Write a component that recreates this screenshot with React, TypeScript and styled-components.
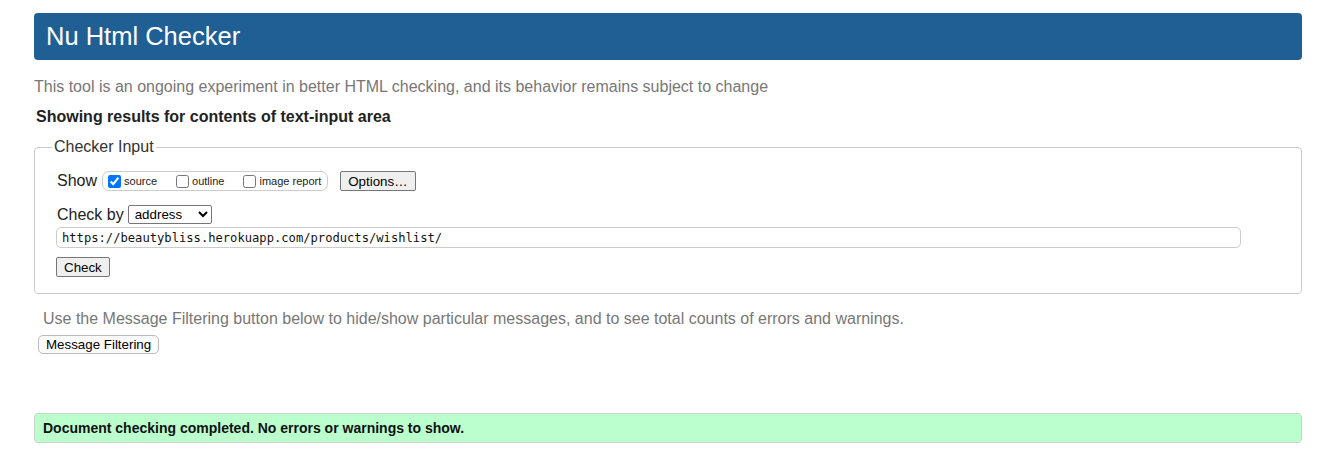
import React from "react";
import styled, { createGlobalStyle } from "styled-components";

const Global = createGlobalStyle`
  html, body { margin: 0; padding: 0; background: #fff; }
  body { font-family: "Liberation Sans", Arial, sans-serif; color: #222; }
`;

const Page = styled.div`
  padding: 13px 22px 0 34px;
  display: flex;
  flex-direction: column;
`;

const Header = styled.header`
  height: 47px;
  background: #1f5f94;
  border-radius: 4px;
  display: flex;
  align-items: center;
  padding-left: 12px;
  h1 {
    margin: 0;
    font-size: 25.5px;
    font-weight: normal;
    color: #fff;
    line-height: 1;
  }
`;

const Note = styled.p<{ $indent?: number; $top: number }>`
  margin: ${(p) => p.$top}px 0 0 ${(p) => p.$indent ?? 0}px;
  font-size: 16px;
  line-height: 18px;
  color: #777;
`;

const Results = styled.h2`
  margin: 12px 0 0 2px;
  font-size: 16px;
  line-height: 18px;
  font-weight: bold;
  color: #222;
`;

const Fieldset = styled.fieldset`
  margin: 12px 0 0 0;
  padding: 0 17px 16px 17px;
  border: 1px solid #ccc;
  border-radius: 4px;
  min-width: 0;
`;

const Legend = styled.legend`
  padding: 0 2px;
  font-size: 16px;
  line-height: 18px;
  color: #333;
`;

const Row = styled.div<{ $top: number }>`
  display: flex;
  align-items: center;
  margin: ${(p) => p.$top}px 0 0 5px;
  font-size: 16px;
  color: #222;
`;

const RowLabel = styled.span`
  font-size: 16px;
  line-height: 18px;
  margin-right: 4px;
`;

const Group = styled.span`
  display: inline-flex;
  align-items: center;
  height: 18px;
  border: 1px solid #ccc;
  border-radius: 7px;
  padding: 0 6px 0 5px;
  margin-left: 1px;
  gap: 19px;
`;

const Opt = styled.label`
  display: inline-flex;
  align-items: center;
  gap: 3px;
  font-size: 11px;
  color: #222;
  input {
    margin: 0;
    width: 13px;
    height: 13px;
  }
`;

const Spacer = styled.span`
  width: 12px;
`;

const Btn = styled.button<{ $round?: boolean }>`
  font-family: "Liberation Sans", Arial, sans-serif;
  font-size: 13.33px;
  line-height: 15px;
  color: #000;
  background: ${(p) => (p.$round ? "#fcfcfc" : "#efefef")};
  border: 1px solid ${(p) => (p.$round ? "#bbb" : "#767676")};
  border-radius: ${(p) => (p.$round ? "5px" : "2px")};
  padding: 1px 7px;
  height: ${(p) => (p.$round ? "19px" : "20px")};
`;

const Select = styled.select`
  width: 84px;
  height: 19px;
  font-family: "Liberation Sans", Arial, sans-serif;
  font-size: 13.33px;
  padding: 0 2px;
  border: 1px solid #767676;
  border-radius: 2px;
  background: #fff;
  color: #000;
`;

const UrlInput = styled.input`
  margin: 3px 0 0 4px;
  width: 1185px;
  height: 21px;
  box-sizing: border-box;
  border: 1px solid #ccc;
  border-radius: 5px;
  padding: 0 5px;
  font-family: "DejaVu Sans Mono", "Liberation Mono", monospace;
  font-size: 12.15px;
  color: #111;
  outline: none;
`;

const CheckWrap = styled.div`
  margin: 9px 0 0 4px;
`;

const FilterWrap = styled.div`
  margin: 7px 0 0 4px;
`;

const Success = styled.div`
  margin-top: 59px;
  height: 30px;
  box-sizing: border-box;
  background: #bbffcc;
  border: 1px solid #c7d6c9;
  border-radius: 4px;
  display: flex;
  align-items: center;
  padding-left: 8px;
  font-size: 14px;
  font-weight: bold;
  color: #111;
`;

export default function App() {
  return (
    <>
      <Global />
      <Page>
        <Header>
          <h1>Nu Html Checker</h1>
        </Header>
        <Note $top={18}>
          This tool is an ongoing experiment in better HTML checking, and its behavior remains subject to change
        </Note>
        <Results>Showing results for contents of text-input area</Results>
        <Fieldset>
          <Legend>Checker Input</Legend>
          <Row $top={15}>
            <RowLabel>Show</RowLabel>
            <Group>
              <Opt>
                <input type="checkbox" defaultChecked />
                source
              </Opt>
              <Opt>
                <input type="checkbox" />
                outline
              </Opt>
              <Opt>
                <input type="checkbox" />
                image report
              </Opt>
            </Group>
            <Spacer />
            <Btn>Options…</Btn>
          </Row>
          <Row $top={14}>
            <RowLabel>Check by</RowLabel>
            <Select defaultValue="address">
              <option value="address">address</option>
              <option value="file">file upload</option>
              <option value="text">text input</option>
            </Select>
          </Row>
          <UrlInput defaultValue="https://beautybliss.herokuapp.com/products/wishlist/" />
          <CheckWrap>
            <Btn>Check</Btn>
          </CheckWrap>
        </Fieldset>
        <Note $top={16} $indent={9}>
          Use the Message Filtering button below to hide/show particular messages, and to see total counts of errors and warnings.
        </Note>
        <FilterWrap>
          <Btn $round>Message Filtering</Btn>
        </FilterWrap>
        <Success>Document checking completed. No errors or warnings to show.</Success>
      </Page>
    </>
  );
}
